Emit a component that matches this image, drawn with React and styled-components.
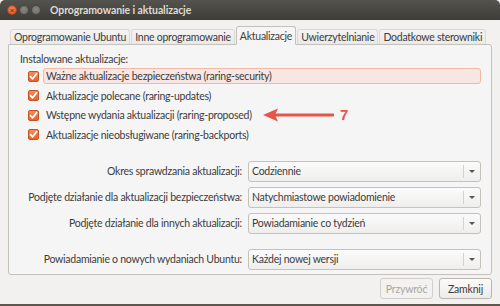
import React from "react";
import styled, { createGlobalStyle } from "styled-components";

const Global = createGlobalStyle`
  html, body { margin: 0; padding: 0; background: #f2f1f0; overflow: hidden; }
  * { box-sizing: border-box; }
`;

const FONT = `Lato, "Noto Sans", "DejaVu Sans", sans-serif`;

const Window = styled.div`
  position: relative;
  width: 500px;
  height: 306px;
  background: #f2f1f0;
  font-family: ${FONT};
  font-size: 10.5px;
  letter-spacing: -0.25px;
  color: #3c3c3c;
  display: flex;
  flex-direction: column;
  border-bottom: 2px solid #5e5750;
`;

const TitleBar = styled.div`
  height: 20px;
  flex: none;
  background: linear-gradient(#55534d, #3d3c38);
  border-radius: 5px 5px 0 0;
  display: flex;
  align-items: center;
  padding-left: 7px;
  gap: 2px;
`;

const WinBtn = styled.span`
  width: 10px;
  height: 10px;
  border-radius: 50%;
  background: ${(p) => (p.$close ? "radial-gradient(circle at 50% 40%, #f38a5a, #e0501f)" : "radial-gradient(circle at 50% 40%, #8a8883, #6a6864)")};
  border: 1px solid ${(p) => (p.$close ? "#b4441c" : "#4a4844")};
  display: flex;
  align-items: center;
  justify-content: center;
  font-size: 8px;
  line-height: 1;
  color: #8a2e10;
  font-weight: bold;
  letter-spacing: 0;
`;

const Title = styled.span`
  margin-left: 7px;
  color: #dfdbd2;
  font-weight: bold;
  font-size: 10.5px;
  letter-spacing: -0.1px;
`;

const Content = styled.div`
  flex: 1;
  display: flex;
  flex-direction: column;
  padding: 5px 8px 0 8px;
`;

const Tabs = styled.div`
  display: flex;
  align-items: flex-end;
  padding-left: 2px;
  height: 19px;
  position: relative;
  z-index: 1;
`;

const Tab = styled.div`
  height: ${(p) => (p.$active ? "19px" : "15px")};
  padding: 0 3px;
  display: flex;
  align-items: center;
  border: 1px solid ${(p) => (p.$active ? "#c4c1bb" : "#dcd9d4")};
  border-bottom: ${(p) => (p.$active ? "1px solid #f5f5f5" : "none")};
  border-radius: 3px 3px 0 0;
  background: ${(p) => (p.$active ? "#f5f5f5" : "linear-gradient(#f4f3f2, #ebe9e7)")};
  margin-right: 1px;
  margin-bottom: ${(p) => (p.$active ? "-1px" : "0")};
  white-space: nowrap;
  color: #3c3c3c;
`;

const Panel = styled.div`
  height: 231px;
  border: 1px solid #c4c1bb;
  border-radius: 0 3px 3px 3px;
  background: #f5f5f5;
  padding: 6px 10px 0 11px;
  display: flex;
  flex-direction: column;
`;

const SectionLabel = styled.div`
  height: 16px;
  display: flex;
  align-items: center;
`;

const CheckList = styled.div`
  display: flex;
  flex-direction: column;
  padding-left: 8px;
  margin-top: 1px;
  gap: 3.5px;
`;

const CheckRow = styled.div`
  display: flex;
  align-items: center;
  height: 16px;
  gap: 4px;
`;

const Box = styled.span`
  width: 11px;
  height: 11px;
  flex: none;
  border-radius: 2px;
  background: linear-gradient(#f58a5d, #e8642c);
  border: 1px solid #c8521f;
  display: flex;
  align-items: center;
  justify-content: center;
`;

const CheckText = styled.span`
  flex: 1;
  height: 16px;
  display: flex;
  align-items: center;
  padding-left: 2px;
  border-radius: 3px;
  border: 1px solid ${(p) => (p.$focus ? "#f3b9a8" : "transparent")};
  background: ${(p) => (p.$focus ? "#f7e6e2" : "transparent")};
  white-space: nowrap;
`;

const Form = styled.div`
  margin-top: 18px;
  display: grid;
  grid-template-columns: 222px 233px;
  column-gap: 6px;
  row-gap: 5px;
  align-items: center;
`;

const FieldLabel = styled.div`
  text-align: right;
  white-space: nowrap;
  margin-top: ${(p) => (p.$gap ? "10px" : "0")};
`;

const Combo = styled.div`
  height: 21px;
  border: 1px solid #c5c2bd;
  border-radius: 3px;
  background: linear-gradient(#fbfbfb, #efeeed);
  display: flex;
  align-items: center;
  padding-left: 3px;
  margin-top: ${(p) => (p.$gap ? "10px" : "0")};
  white-space: nowrap;
`;

const ComboText = styled.span`
  flex: 1;
`;

const ComboArrow = styled.span`
  width: 17px;
  height: 13px;
  border-left: 1px solid #d6d3cf;
  display: flex;
  align-items: center;
  justify-content: center;
  &::after {
    content: "";
    border-left: 3px solid transparent;
    border-right: 3px solid transparent;
    border-top: 3px solid #555;
  }
`;

const Footer = styled.div`
  display: flex;
  justify-content: flex-end;
  gap: 6px;
  padding: 3px 0 0 0;
`;

const Button = styled.button`
  height: 21px;
  min-width: 53px;
  padding: 0 4px;
  font-family: ${FONT};
  font-size: 10.5px;
  letter-spacing: -0.2px;
  border: 1px solid ${(p) => (p.disabled ? "#d3d0cb" : "#b9b5b0")};
  border-radius: 3px;
  background: ${(p) => (p.disabled ? "#f3f2f1" : "linear-gradient(#fbfbfa, #ecebe9)")};
  color: ${(p) => (p.disabled ? "#a9a6a1" : "#3c3c3c")};
`;

const Annotation = styled.div`
  position: absolute;
  left: 262px;
  top: 106px;
  display: flex;
  align-items: center;
  gap: 6px;
  color: #e8534a;
  font-weight: bold;
  font-size: 15px;
  letter-spacing: 0;
  font-family: "Liberation Sans", Arial, sans-serif;
`;

const Check = () => (
  <svg width="9" height="9" viewBox="0 0 9 9">
    <path d="M1.5 4.6 L3.6 6.8 L7.6 1.8" fill="none" stroke="#fff" strokeWidth="1.8" strokeLinecap="round" strokeLinejoin="round" />
  </svg>
);

const items = [
  "Ważne aktualizacje bezpieczeństwa (raring-security)",
  "Aktualizacje polecane (raring-updates)",
  "Wstępne wydania aktualizacji (raring-proposed)",
  "Aktualizacje nieobsługiwane (raring-backports)",
];

const fields = [
  ["Okres sprawdzania aktualizacji:", "Codziennie"],
  ["Podjęte działanie dla aktualizacji bezpieczeństwa:", "Natychmiastowe powiadomienie"],
  ["Podjęte działanie dla innych aktualizacji:", "Powiadamianie co tydzień"],
  ["Powiadamianie o nowych wydaniach Ubuntu:", "Każdej nowej wersji", true],
];

export default function App() {
  return (
    <Window>
      <Global />
      <TitleBar>
        <WinBtn $close>×</WinBtn>
        <WinBtn />
        <WinBtn />
        <Title>Oprogramowanie i aktualizacje</Title>
      </TitleBar>
      <Content>
        <Tabs>
          <Tab>Oprogramowanie Ubuntu</Tab>
          <Tab>Inne oprogramowanie</Tab>
          <Tab $active>Aktualizacje</Tab>
          <Tab>Uwierzytelnianie</Tab>
          <Tab>Dodatkowe sterowniki</Tab>
        </Tabs>
        <Panel>
          <SectionLabel>Instalowane aktualizacje:</SectionLabel>
          <CheckList>
            {items.map((t, i) => (
              <CheckRow key={t}>
                <Box><Check /></Box>
                <CheckText $focus={i === 0}>{t}</CheckText>
              </CheckRow>
            ))}
          </CheckList>
          <Form>
            {fields.map(([l, v, gap]) => (
              <React.Fragment key={l}>
                <FieldLabel $gap={gap}>{l}</FieldLabel>
                <Combo $gap={gap}>
                  <ComboText>{v}</ComboText>
                  <ComboArrow />
                </Combo>
              </React.Fragment>
            ))}
          </Form>
        </Panel>
        <Footer>
          <Button disabled>Przywróć</Button>
          <Button>Zamknij</Button>
        </Footer>
      </Content>
      <Annotation>
        <svg width="72" height="16" viewBox="0 0 72 16">
          <path d="M14 8 L71 8" stroke="#e8534a" strokeWidth="3" strokeLinecap="round" />
          <path d="M1 8 L16 1.5 L13 8 L16 14.5 Z" fill="#e8534a" />
        </svg>
        <span>7</span>
      </Annotation>
    </Window>
  );
}
